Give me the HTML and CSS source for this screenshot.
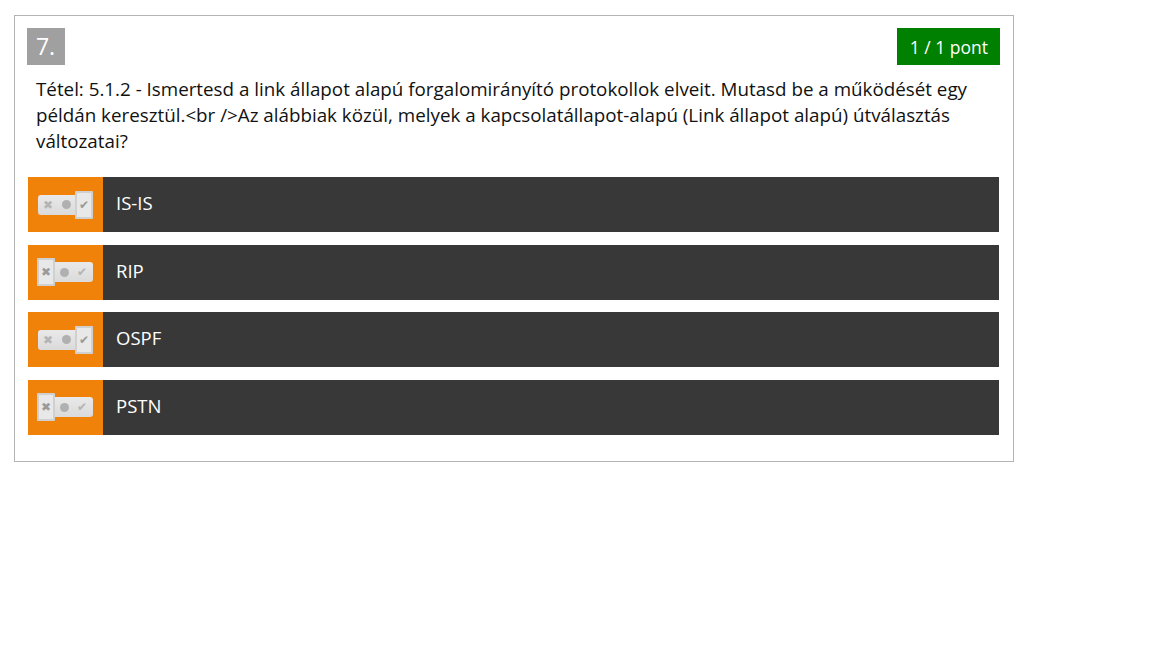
FILE: index.html
```html
<!DOCTYPE html>
<html lang="hu">
<head>
<meta charset="utf-8">
<link rel="stylesheet" href="styles.css">
</head>
<body>
<div class="frame">
  <div class="head">
    <div class="num">7.</div>
    <div class="points">1 / 1 pont</div>
  </div>
  <div class="question">Tétel: 5.1.2 - Ismertesd a link állapot alapú forgalomirányító protokollok elveit. Mutasd be a működését egy példán keresztül.&lt;br /&gt;Az alábbiak közül, melyek a kapcsolatállapot-alapú (Link állapot alapú) útválasztás változatai?</div>
  <div class="answers">
    <div class="row">
      <div class="sel"><div class="toggle on-yes"><span class="t t-no">✖</span><span class="t t-mid"></span><span class="t t-yes">✔</span></div></div>
      <div class="label">IS-IS</div>
    </div>
    <div class="row">
      <div class="sel"><div class="toggle on-no"><span class="t t-no">✖</span><span class="t t-mid"></span><span class="t t-yes">✔</span></div></div>
      <div class="label">RIP</div>
    </div>
    <div class="row">
      <div class="sel"><div class="toggle on-yes"><span class="t t-no">✖</span><span class="t t-mid"></span><span class="t t-yes">✔</span></div></div>
      <div class="label">OSPF</div>
    </div>
    <div class="row">
      <div class="sel"><div class="toggle on-no"><span class="t t-no">✖</span><span class="t t-mid"></span><span class="t t-yes">✔</span></div></div>
      <div class="label">PSTN</div>
    </div>
  </div>
</div>
</body>
</html>
```
FILE: styles.css
```css
html, body {
  margin: 0;
  padding: 0;
  background: #fff;
}
body {
  font-family: "Open Sans", "DejaVu Sans", sans-serif;
}
.frame {
  margin: 15px 0 0 14px;
  border: 1px solid #b4b4b4;
  padding: 12px 13px 26px 12px;
  box-sizing: border-box;
  width: 1000px;
}
.head {
  display: flex;
  justify-content: space-between;
  align-items: flex-start;
  height: 37px;
}
.num {
  width: 38px;
  height: 37px;
  background: #a0a0a0;
  color: #fff;
  font-size: 23px;
  line-height: 37px;
  text-align: center;
  box-sizing: border-box;
  padding-right: 1px;
}
.points {
  height: 37px;
  background: #008000;
  color: #fff;
  font-size: 17.5px;
  line-height: 38px;
  padding: 0 12px 0 13px;
}
.question {
  margin: 11px 0 0 9px;
  font-size: 18.8px;
  line-height: 26px;
  color: #111;
  padding-right: 10px;
}
.answers {
  margin: 23px 1px 0 1px;
  display: flex;
  flex-direction: column;
  gap: 12.5px;
}
.row {
  display: flex;
  height: 55px;
  background: #383838;
}
.sel {
  width: 75px;
  flex: none;
  background: #f0820a;
  display: flex;
  align-items: center;
  padding-left: 10px;
  box-sizing: border-box;
}
.toggle {
  position: relative;
  width: 55px;
  height: 20px;
  border-radius: 3px;
  background: linear-gradient(#e9e9e9, #dadada);
  display: flex;
  align-items: center;
  justify-content: space-between;
  padding: 0 4px 0 3px;
  box-sizing: border-box;
}
.t {
  width: 14px;
  text-align: center;
  color: #b4b4b4;
  font-size: 12px;
  line-height: 20px;
  font-family: "DejaVu Sans", sans-serif;
}
.t-mid {
  width: 9px;
  height: 9px;
  border-radius: 50%;
  background: #b0b0b0;
}
.on-yes .t-yes,
.on-no .t-no {
  color: #9a9a9a;
  position: relative;
  z-index: 0;
}
.on-yes .t-yes::before,
.on-no .t-no::before {
  content: "";
  position: absolute;
  top: -4px;
  bottom: -4px;
  left: -2px;
  right: -2px;
  border: 2px solid #d0d0d0;
  background: #e8e8e8;
  border-radius: 1px;
  z-index: -1;
}
.on-no .t-no { margin-left: -2px; }
.on-yes .t-yes { margin-right: -2px; }
.label {
  color: #fff;
  font-size: 18.5px;
  line-height: 52px;
  padding-left: 13px;
}
```
